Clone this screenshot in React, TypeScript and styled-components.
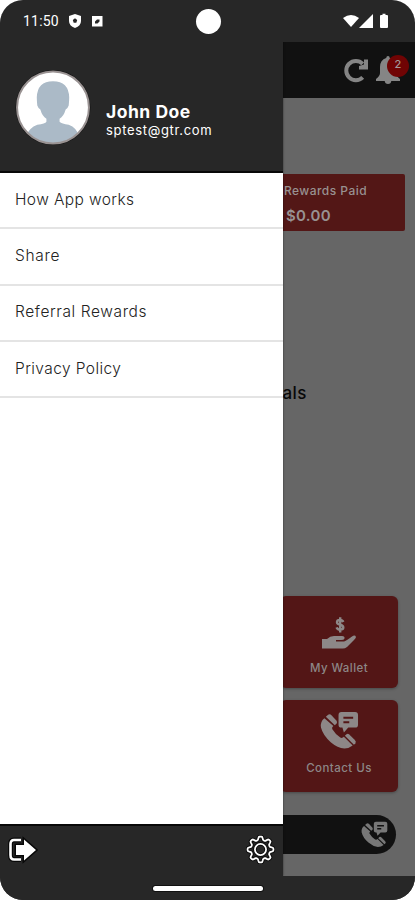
import React from "react";
import styled, { createGlobalStyle } from "styled-components";

const GlobalStyle = createGlobalStyle`
  * { box-sizing: border-box; }
  body { margin: 0; background: #fff; font-family: Inter, "Open Sans", sans-serif; }
`;

const Phone = styled.div`
  position: relative;
  width: 415px;
  height: 900px;
  border-radius: 23px;
  overflow: hidden;
  background: #272727;
  display: flex;
  flex-direction: column;
`;

const StatusBar = styled.header`
  height: 42px;
  flex: none;
  display: grid;
  grid-template-columns: 1fr 24px 1fr;
  align-items: center;
  padding: 0 23px;
  color: #fff;
`;

const StatusGroup = styled.div<{ $end?: boolean }>`
  display: flex;
  align-items: center;
  justify-content: ${(p) => (p.$end ? "flex-end" : "flex-start")};
  padding-right: ${(p) => (p.$end ? 3 : 0)}px;
`;

const Clock = styled.span`
  font: 400 14px/16px Roboto, sans-serif;
  letter-spacing: 0.2px;
  width: 46px;
`;

const Camera = styled.span`
  width: 25px;
  height: 25px;
  border-radius: 50%;
  background: #fff;
`;

const Screen = styled.main`
  flex: 1;
  display: flex;
  flex-direction: column;
  background: #666;
`;

const AppBar = styled.div`
  height: 56px;
  display: flex;
  justify-content: flex-end;
  align-items: center;
  background: #111;
  padding: 0 15px 0 0;
  gap: 7px;
`;

const Bell = styled.div`
  position: relative;
  width: 24px;
  height: 30px;
`;

const Badge = styled.span`
  position: absolute;
  left: 11px;
  top: 0;
  width: 22px;
  height: 22px;
  border-radius: 50%;
  background: #700404;
  color: #a39a9a;
  font-size: 11px;
  font-weight: 500;
  line-height: 19px;
  text-align: center;
`;

const PaidCard = styled.section`
  margin: 76px 10px 0 auto;
  width: 190px;
  height: 57px;
  border-radius: 2px;
  background: #531716;
  color: #989191;
  padding: 8px 0 0 69px;
`;

const PaidLabel = styled.div`
  font-size: 12px;
  line-height: 18px;
  font-weight: 500;
  letter-spacing: 0.45px;
  white-space: nowrap;
`;

const PaidValue = styled.div`
  font-size: 15px;
  line-height: 20px;
  margin-top: 6px;
  padding-left: 2px;
  font-weight: 600;
  letter-spacing: 0.3px;
`;

const Heading = styled.h2`
  margin: 150px 108px 0 auto;
  font-size: 17px;
  line-height: 24px;
  font-weight: 500;
  letter-spacing: 0.5px;
  color: #080808;
`;

const Tiles = styled.div`
  margin: 191px 17px 0 auto;
  width: 118px;
  display: grid;
  grid-auto-rows: 92px;
  row-gap: 12px;
`;

const Tile = styled.div`
  display: flex;
  flex-direction: column;
  align-items: center;
  background: #531616;
  border-radius: 6px;
  box-shadow: 0 1px 3px rgba(0, 0, 0, 0.3);
  color: #8d8787;
`;

const TileIcon = styled.div<{ $top: number }>`
  height: 40px;
  margin-top: ${(p) => p.$top}px;
`;

const TileLabel = styled.span<{ $gap: number; $spacing: number }>`
  margin-top: ${(p) => p.$gap}px;
  font-size: 11.5px;
  line-height: 18px;
  font-weight: 500;
  letter-spacing: ${(p) => p.$spacing}px;
`;

const CallPill = styled.div`
  margin: 23px 19px 0 auto;
  width: 340px;
  height: 39px;
  border-radius: 20px;
  background: #111;
  display: flex;
  justify-content: flex-end;
  align-items: center;
  padding-right: 8px;
`;

const NavBar = styled.footer`
  flex: none;
  height: 24px;
  background: #272727;
`;

const Drawer = styled.aside`
  position: absolute;
  left: 0;
  top: 42px;
  bottom: 24px;
  width: 283px;
  display: flex;
  flex-direction: column;
  background: #fff;
  box-shadow: 0 0 2px rgba(0, 0, 0, 0.55);
  clip-path: inset(0 -4px 0 0);
`;

const Profile = styled.div`
  height: 131px;
  flex: none;
  display: flex;
  background: #272727;
  border-bottom: 2px solid #080808;
  padding: 27px 0 0 15px;
  gap: 15px;
`;

const Identity = styled.div`
  padding-top: 32px;
  color: #fff;
`;

const Name = styled.div`
  font-size: 17.5px;
  line-height: 21px;
  font-weight: 700;
  letter-spacing: 0.5px;
`;

const Email = styled.div`
  font-size: 13px;
  line-height: 16px;
  letter-spacing: 0.68px;
`;

const Menu = styled.ul`
  list-style: none;
  margin: 0;
  padding: 0;
  flex: 1;
`;

const MenuItem = styled.li<{ $spacing: number }>`
  height: 56.3px;
  padding: 14.7px 0 0 15px;
  border-bottom: 2.5px solid #e4e4e4;
  font-size: 15.5px;
  line-height: 24px;
  font-weight: 300;
  color: #222;
  letter-spacing: ${(p) => p.$spacing}px;
`;

const DrawerFooter = styled.div`
  height: 52px;
  flex: none;
  display: flex;
  justify-content: space-between;
  background: #272727;
  border-top: 2px solid #080808;
  padding: 9px 8px 0 8px;
`;

const HomeHandle = styled.div`
  position: absolute;
  left: 153px;
  bottom: 9px;
  width: 110px;
  height: 5px;
  border-radius: 3px;
  background: #fff;
  box-shadow: 0 0 0 1px #111;
`;

const PhoneChat = ({ size, cut, color }: { size: number; cut: string; color: string }) => (
  <svg width={size} height={size} viewBox="0 0 40 40">
    <path
      fill={color}
      d="M4.500 7.500Q0 11 1 17Q3 25 11 32Q18 38 25 38.500Q30 38.500 33.500 35.500L24.500 26.500Q22.500 28.500 20.500 27Q15.500 23.500 12.500 18.500Q12 16.800 13.700 15.500Z"
    />
    <path fill={color} d="M6 6L8 4Q10 2.500 12 4.500L17 10Q18 11.500 17 12.800L15.200 14.600Z" />
    <path fill={color} d="M25.500 25.500L27.200 23.800Q28.500 22.800 30 24L35.500 29.500Q37.500 31.500 36.300 33L34.800 34.500Z" />
    <path
      fill={color}
      d="M22 1H36Q39 1 39 4V14Q39 17 36 17H29L24.500 22L23 17H22Q19 17 19 14V4Q19 1 22 1Z"
    />
    <path stroke={cut} strokeWidth="2" d="M24 7H34M24 11.500H30" />
  </svg>
);

const gearPath = (() => {
  const pts: string[] = [];
  for (let i = 0; i < 96; i++) {
    const a = (i / 96) * Math.PI * 2 - Math.PI / 2;
    const wave = Math.tanh(2 * Math.cos(8 * (a + Math.PI / 2))) / Math.tanh(2);
    const r = 10.9 + wave * 1.6;
    pts.push(`${(14 + r * Math.cos(a)).toFixed(2)} ${(14 + r * Math.sin(a)).toFixed(2)}`);
  }
  return `M${pts.join("L")}Z`;
})();

const items = [
  { label: "How App works", spacing: 0.4 },
  { label: "Share", spacing: 0.7 },
  { label: "Referral Rewards", spacing: 0.6 },
  { label: "Privacy Policy", spacing: 0.42 },
];

export default function App() {
  return (
    <>
      <GlobalStyle />
      <Phone>
        <StatusBar>
          <StatusGroup>
            <Clock>11:50</Clock>
            <svg width="36" height="16" viewBox="0 0 36 16">
              <path
                fill="#fff"
                fillRule="evenodd"
                d="M6 1 L12 3 V8 Q12 13 6 15 Q0 13 0 8 V3Z M6 5.2 L3.8 7 L4.7 9.8 H7.3 L8.2 7Z"
              />
              <path fill="#fff" fillRule="evenodd" d="M23 3H33.500V13.500H23Z M26 10.500V8.500L28 6.500H30.500V8.500L28.500 10.500Z" />
            </svg>
          </StatusGroup>
          <Camera />
          <StatusGroup $end>
            <svg width="46" height="16" viewBox="0 0 46 16">
              <path fill="#fff" d="M0 5 Q8 -1 16 5 L8 14Z" />
              <path fill="#fff" d="M30 1V15H16Z" />
              <path fill="#fff" d="M38 2H39.5V0.8H42.5V2H44Q45 2 45 3V14Q45 15 44 15H38Q37 15 37 14V3Q37 2 38 2Z" />
            </svg>
          </StatusGroup>
        </StatusBar>

        <Screen>
          <AppBar>
            <svg width="25" height="25" viewBox="0 0 25 25">
              <path d="M18.7 19.300A9.6 9.6 0 1 1 18.7 5.800" fill="none" stroke="#858585" strokeWidth="4" />
              <path d="M24 1.500V11.500H15V8L20 6.500V1.500Z" fill="#858585" />
            </svg>
            <Bell>
              <svg width="24" height="30" viewBox="0 0 24 30">
                <path
                  fill="#858585"
                  d="M12 1 Q13.6 1 13.8 3 Q20 5 20 12 V18 Q20 21 24 24 V26 H0 V24 Q4 21 4 18 V12 Q4 5 10.2 3 Q10.4 1 12 1Z M8.7 26H15.3Q15 29 12 29Q9 29 8.7 26Z"
                />
              </svg>
              <Badge>2</Badge>
            </Bell>
          </AppBar>

          <PaidCard>
            <PaidLabel>Rewards Paid</PaidLabel>
            <PaidValue>$0.00</PaidValue>
          </PaidCard>

          <Heading>Referrals</Heading>

          <Tiles>
            <Tile>
              <TileIcon $top={20}>
                <svg width="34" height="34" viewBox="0 0 34 34">
                  <path
                    fill="none"
                    stroke="#8d8787"
                    strokeWidth="2.4"
                    d="M21.300 6Q20.500 4 18 4Q15 4 15 6.200Q15 8 18 8.600Q21.300 9.200 21.300 11.500Q21.300 13.600 18.200 13.600Q15.200 13.600 14.600 11.400M18.200 1.200V16.400"
                  />
                  <path
                    fill="#8d8787"
                    d="M0 23H5Q8 20 12 20H20Q23 20 22.5 22.5Q22 24 19 24H14V25.4H22Q24 25 30 20.5Q33 18.5 34 21Q34 22 32 24L25 31Q23 32.5 21 32.5H0Z"
                  />
                </svg>
              </TileIcon>
              <TileLabel $gap={3} $spacing={0.45}>My Wallet</TileLabel>
            </Tile>
            <Tile>
              <TileIcon $top={11}>
                <PhoneChat size={39} cut="#531616" color="#8d8787" />
              </TileIcon>
              <TileLabel $gap={8} $spacing={0.45}>Contact Us</TileLabel>
            </Tile>
          </Tiles>

          <CallPill>
            <PhoneChat size={27} cut="#111" color="#777" />
          </CallPill>
        </Screen>
        <NavBar />

        <Drawer>
          <Profile>
            <svg width="76" height="77" viewBox="0 0 75 76">
              <defs>
                <clipPath id="avatar">
                  <circle cx="37.5" cy="38" r="35.5" />
                </clipPath>
              </defs>
              <circle cx="37.5" cy="38" r="37" fill="#111" />
              <circle cx="37.5" cy="38" r="35.5" fill="#fff" />
              <g clipPath="url(#avatar)" fill="#abbac7">
                <path d="M37.5 12Q53 12 53.5 28Q53.5 32 53 36Q52 39 50 40Q48 47 44 49V52Q46 54 53 55Q61 58 63 66V76H11V66Q14 58 22 55Q30 54 31 52V49Q27 47 25 40Q23 39 22 36Q21.500 32 21.500 28Q22 12 37.500 12Z" />
              </g>
              <circle cx="37.5" cy="38" r="35.5" fill="none" stroke="#999292" strokeWidth="2" />
            </svg>
            <Identity>
              <Name>John Doe</Name>
              <Email>sptest@gtr.com</Email>
            </Identity>
          </Profile>
          <Menu>
            {items.map((item) => (
              <MenuItem key={item.label} $spacing={item.spacing}>
                {item.label}
              </MenuItem>
            ))}
          </Menu>
          <DrawerFooter>
            <svg width="30" height="32" viewBox="0 0 30 32">
              <path
                d="M13 5H6Q2.500 5 2.500 9V20Q2.500 24.500 6 24.500H13"
                fill="none"
                stroke="#080808"
                strokeWidth="5"
              />
              <path d="M13 5H6Q2.500 5 2.500 9V20Q2.500 24.500 6 24.500H13" fill="none" stroke="#fff" strokeWidth="2.600" />
              <path
                d="M8 10H16V4.500L28 15L16 25.500V20H8Z"
                fill="#fff"
                stroke="#080808"
                strokeWidth="3"
                paintOrder="stroke"
              />
            </svg>
            <svg width="29" height="29" viewBox="0 0 28 28">
              <path d={gearPath} fill="none" stroke="#0c0c0c" strokeWidth="3.600" />
              <circle cx="14" cy="14" r="5.400" fill="none" stroke="#0c0c0c" strokeWidth="3.600" />
              <path d={gearPath} fill="none" stroke="#fff" strokeWidth="1.700" />
              <circle cx="14" cy="14" r="5.400" fill="none" stroke="#fff" strokeWidth="1.700" />
            </svg>
          </DrawerFooter>
        </Drawer>
        <HomeHandle />
      </Phone>
    </>
  );
}
